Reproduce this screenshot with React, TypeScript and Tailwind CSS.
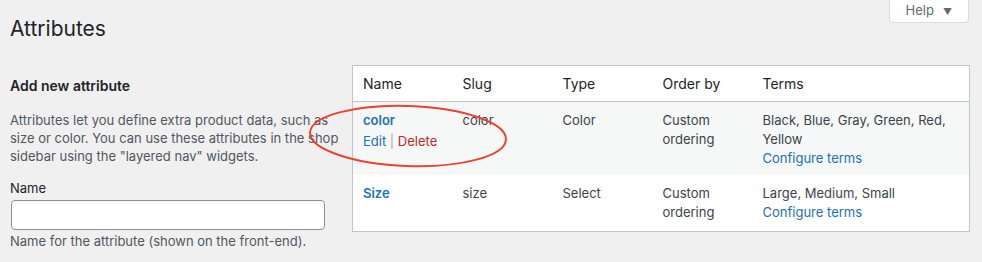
import React from 'react'

const rows = [
    {
        name: 'color',
        slug: 'color',
        type: 'Color',
        order: 'Custom ordering',
        terms: 'Black, Blue, Gray, Green, Red, Yellow',
        actions: true,
        striped: true,
    },
    {
        name: 'Size',
        slug: 'size',
        type: 'Select',
        order: 'Custom ordering',
        terms: 'Large, Medium, Small',
        actions: false,
        striped: false,
    },
]

const App = () => {
    return (
        <div
            className="relative w-[982px] h-[262px] overflow-hidden bg-[#f0f0f1] text-[#3c434a]"
            style={{ fontFamily: 'Inter, "Liberation Sans", sans-serif' }}
        >
            <div className="flex items-start justify-between pl-[10px] pr-[13px]">
                <h1 className="pt-[14px] text-[21px] leading-[30px] font-normal text-[#1d2327]">Attributes</h1>
                <button className="flex items-center gap-[9px] h-[23px] px-[16px] bg-white border border-t-0 border-[#dcdcde] rounded-b-[4px] text-[13px] text-[#646970]">
                    Help
                    <span className="text-[9px] leading-none">▼</span>
                </button>
            </div>

            <div className="flex pl-[10px] mt-[21px] gap-[12px]">
                {/* left column */}
                <div className="w-[330px] shrink-0">
                    <h2 className="mt-[11px] text-[14px] leading-[20px] font-semibold text-[#1d2327]">Add new attribute</h2>
                    <p className="mt-[15px] text-[13px] leading-[18px] text-[#50575e]">
                        Attributes let you define extra product data, such as size or color. You can use these attributes in the shop sidebar using the "layered nav" widgets.
                    </p>
                    <label htmlFor="attr-name" className="block mt-[14px] text-[13px] leading-[18px] text-[#1d2327]">
                        Name
                    </label>
                    <input
                        id="attr-name"
                        type="text"
                        className="block mt-[3px] ml-[1px] w-[314px] h-[30px] bg-white border border-[#8c8f94] rounded-[4px] px-2 text-[14px] focus:outline-none"
                    />
                    <p className="mt-[2px] text-[13px] leading-[18px] text-[#50575e]">Name for the attribute (shown on the front-end).</p>
                </div>

                {/* right column */}
                <div className="w-[618px] shrink-0">
                    <table className="w-full table-fixed border-collapse border border-[#c3c4c7] bg-white">
                        <thead>
                            <tr className="border-b border-[#c3c4c7]">
                                <th className="w-[100px] h-[36px] px-[10px] text-left text-[14px] font-normal text-[#1d2327]">Name</th>
                                <th className="w-[100px] px-[10px] text-left text-[14px] font-normal text-[#1d2327]">Slug</th>
                                <th className="w-[100px] px-[10px] text-left text-[14px] font-normal text-[#1d2327]">Type</th>
                                <th className="w-[100px] px-[10px] text-left text-[14px] font-normal text-[#1d2327]">Order by</th>
                                <th className="px-[10px] text-left text-[14px] font-normal text-[#1d2327]">Terms</th>
                            </tr>
                        </thead>
                        <tbody>
                            {rows.map((r) => (
                                <tr key={r.slug} className={r.striped ? 'bg-[#f6f7f7]' : 'bg-white'}>
                                    <td className="align-top px-[10px] pt-[9px] text-[13px] leading-[19px]">
                                        <a href="#" className="font-semibold text-[#2271b1]">{r.name}</a>
                                        {r.actions && (
                                            <div className="pt-[2px]">
                                                <a href="#" className="text-[#2271b1]">Edit</a>
                                                <span className="text-[#a7aaad]"> | </span>
                                                <a href="#" className="text-[#b32d2e]">Delete</a>
                                            </div>
                                        )}
                                    </td>
                                    <td className="align-top px-[10px] pt-[9px] text-[13px] leading-[19px]">{r.slug}</td>
                                    <td className="align-top px-[10px] pt-[9px] text-[13px] leading-[19px]">{r.type}</td>
                                    <td className="align-top px-[10px] pt-[9px] text-[13px] leading-[19px]">{r.order}</td>
                                    <td className={`align-top px-[10px] pt-[9px] text-[13px] leading-[19px] ${r.striped ? 'pb-[7px]' : 'pb-[9px]'}`}>
                                        <div>{r.terms}</div>
                                        <a href="#" className="text-[#2271b1]">Configure terms</a>
                                    </td>
                                </tr>
                            ))}
                        </tbody>
                    </table>
                </div>
            </div>

            {/* red annotation ring */}
            <svg className="absolute inset-0 pointer-events-none" width="982" height="262">
                <ellipse cx="408" cy="136" rx="98" ry="30" transform="rotate(2 408 136)" fill="none" stroke="#e8432f" strokeWidth="2" />
            </svg>
        </div>
    )
}

export default App
